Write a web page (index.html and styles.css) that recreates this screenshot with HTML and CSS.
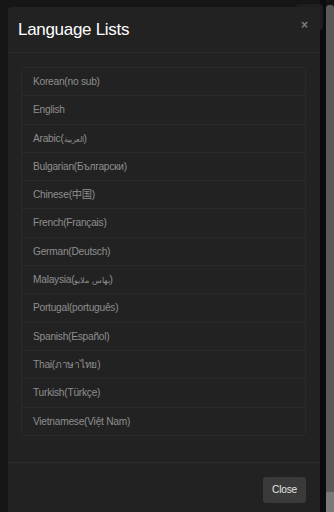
FILE: index.html
```html
<!DOCTYPE html>
<html>
<head>
<meta charset="utf-8">
<link rel="stylesheet" href="styles.css">
</head>
<body>
<div class="screen">
  <div class="corner-box"></div>
  <div class="stage">
    <div class="modal">
      <div class="modal-header">
        <h4 class="modal-title">Language Lists</h4>
        <span class="close">×</span>
      </div>
      <div class="modal-body">
        <ul class="list">
          <li class="item">Korean(no sub)</li>
          <li class="item">English</li>
          <li class="item">Arabic(<span class="rtl">العربية</span>)</li>
          <li class="item">Bulgarian(Български)</li>
          <li class="item">Chinese(中国)</li>
          <li class="item">French(Français)</li>
          <li class="item">German(Deutsch)</li>
          <li class="item">Malaysia(<span class="rtl">بهاس ملايو</span>)</li>
          <li class="item">Portugal(português)</li>
          <li class="item">Spanish(Español)</li>
          <li class="item">Thai(ภาษาไทย)</li>
          <li class="item">Turkish(Türkçe)</li>
          <li class="item">Vietnamese(Việt Nam)</li>
        </ul>
      </div>
      <div class="modal-footer">
        <button class="btn">Close</button>
      </div>
    </div>
  </div>
  <div class="gutter"></div>
  <div class="scrollbar">
    <div class="scroll-top"></div>
    <div class="scroll-thumb"></div>
    <div class="scroll-end"></div>
  </div>
</div>
</body>
</html>
```
FILE: styles.css
```css
html, body {
  margin: 0;
  padding: 0;
}
body {
  background: #151515;
  font-family: "Liberation Sans", Arial, "Noto Sans CJK SC", sans-serif;
  height: 512px;
  overflow: hidden;
}
.screen {
  display: flex;
  height: 512px;
  position: relative;
}
.corner-box {
  position: absolute;
  left: 296px;
  top: 4px;
  width: 27px;
  height: 26px;
  background: #1e1e1e;
  border-radius: 4px;
  z-index: 1;
}
.stage {
  width: 320px;
  flex: none;
  background: #161616;
}
.modal {
  position: relative;
  z-index: 2;
  margin: 7px 0 0 8px;
  width: 312px;
  height: 505px;
  background: #222222;
  border-radius: 4px 4px 0 0;
  display: flex;
  flex-direction: column;
}
.modal-header {
  height: 45px;
  border-bottom: 1px solid #2b2b2b;
  display: flex;
  align-items: center;
  justify-content: space-between;
  padding: 0 12px 0 10px;
}
.modal-title {
  margin: 0;
  color: #ffffff;
  font-size: 17px;
  letter-spacing: -0.3px;
  font-weight: normal;
  line-height: 20px;
  margin-top: 1px;
}
.close {
  color: #7c7c7c;
  font-weight: bold;
  font-size: 12px;
  line-height: 12px;
  margin-top: -10px;
}
.modal-body {
  padding: 14px 14px 26px 13px;
}
.list {
  list-style: none;
  margin: 0;
  padding: 0;
  border: 1px solid #2a2a2a;
  border-radius: 4px;
}
.item {
  height: 27.3px;
  line-height: 27.3px;
  padding: 0 11px;
  color: #8e8e8e;
  font-size: 10.2px;
  letter-spacing: -0.25px;
  border-top: 1px solid #2a2a2a;
}
.item:first-child {
  border-top: none;
}
.rtl {
  font-size: 8px;
  letter-spacing: 0;
}
.modal-footer {
  border-top: 1px solid #2b2b2b;
  padding: 14px 14px 0;
  display: flex;
  justify-content: flex-end;
}
.btn {
  width: 43px;
  height: 26px;
  background: #3a3a3a;
  border: none;
  border-radius: 3px;
  color: #e2e2e2;
  font-family: "Liberation Sans", Arial, sans-serif;
  font-size: 10.2px;
  letter-spacing: -0.25px;
  padding: 0;
}
.gutter {
  width: 6px;
  flex: none;
  background: #0b0b0b;
}
.scrollbar {
  width: 8px;
  flex: none;
  display: flex;
  flex-direction: column;
  background: #0b0b0b;
}
.scroll-top {
  height: 5px;
  background: #141414;
}
.scroll-thumb {
  flex: 1;
  background: #5a5a5a;
  border-radius: 3px 3px 0 0;
}
.scroll-end {
  height: 20px;
  background: #7a7a7a;
}
```
